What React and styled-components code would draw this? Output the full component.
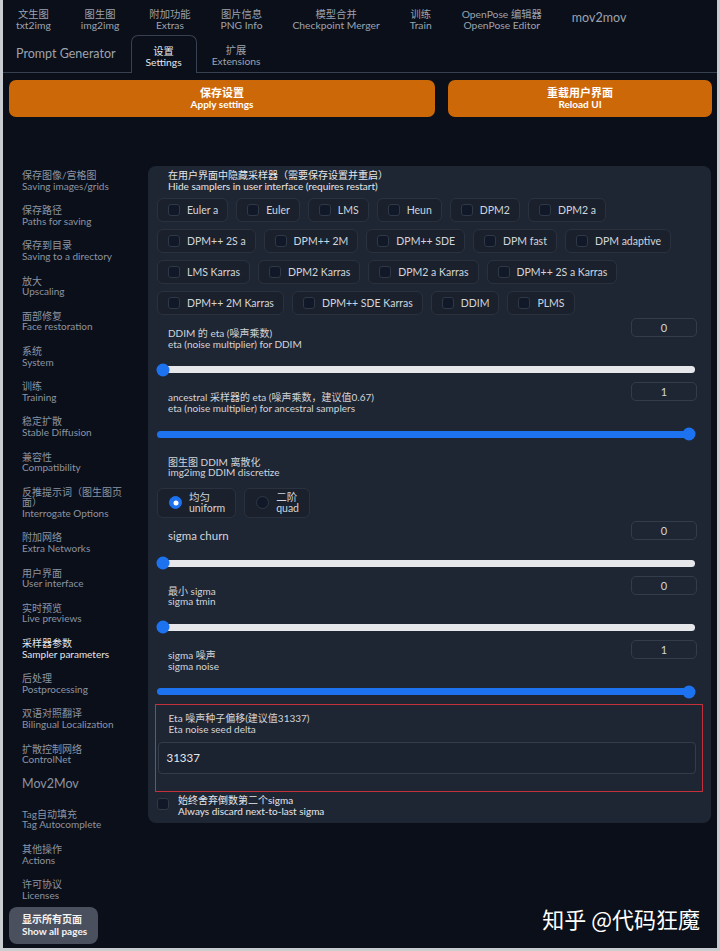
import React from 'react';
import styled, { createGlobalStyle, css } from 'styled-components';

const GlobalStyle = createGlobalStyle`
  html, body { margin: 0; padding: 0; background: #c9ccd1; }
  body { font-family: Lato, "Noto Sans CJK SC", sans-serif; }
  * { box-sizing: border-box; }
`;

const Frame = styled.div`
  position: relative;
  width: 720px;
  height: 951px;
  border: 3px solid #c9ccd1;
  border-top: none;
  background: #0b0f19;
  overflow: hidden;
  color: #d1d5db;
`;

const NavRow = styled.div`
  display: flex;
  align-items: center;
  height: 35px;
  margin-left: -2px;
`;

const SubRow = styled.div`
  display: flex;
  align-items: stretch;
  height: 38px;
  border-bottom: 1px solid #374151;
  margin-left: -2px;
`;

const Tab = styled.div`
  display: flex;
  flex-direction: column;
  justify-content: center;
  padding: 0 15px;
  color: ${p => (p.$active ? '#e5e7eb' : '#9ca3af')};
  font-size: 12.5px;
  text-align: center;
  white-space: nowrap;
  ${p => p.$active && css`
    padding: 0 14px;
    border: 1px solid #374151;
    border-bottom: none;
    border-radius: 7px 7px 0 0;
    background: #0b0f19;
    margin-bottom: -1px;
  `}
`;

const Bi = styled.div`
  margin-top: 5px;
  font-size: 10.3px;
  line-height: 11px;
`;

const ButtonRow = styled.div`
  display: grid;
  grid-template-columns: 426fr 264fr;
  gap: 13px;
  margin-top: 7px;
  padding: 0 5px 0 6px;
`;

const ActionButton = styled.button`
  height: 37px;
  border: none;
  border-radius: 7px;
  background: #cd6809;
  color: #fff;
  font-family: inherit;
  font-weight: 700;
  line-height: 11.5px;
  display: flex;
  flex-direction: column;
  align-items: center;
  justify-content: center;
  & span:first-child { font-size: 11px; line-height: 12px; }
  & span:last-child { font-size: 10px; }
`;

const Main = styled.div`
  display: grid;
  grid-template-columns: 132px 1fr;
  gap: 7px;
  align-items: start;
  margin-top: 46px;
  padding: 0 6px 0 6px;
`;

const Sidebar = styled.nav`
  display: flex;
  flex-direction: column;
`;

const NavItem = styled.div`
  padding: 7px 13px;
  font-size: 10px;
  line-height: 10.6px;
  color: ${p => (p.$active ? '#e5e7eb' : '#8c94a2')};
`;

const NavSingle = styled.div`
  padding: 4px 13px 10px;
  font-size: 12.5px;
  line-height: 16px;
  color: #8c94a2;
`;

const ShowAll = styled.div`
  width: 89px;
  height: 37px;
  border-radius: 8px;
  background: #4a505d;
  color: #f3f4f6;
  font-weight: 700;
  font-size: 10px;
  line-height: 11.5px;
  padding: 7px 0 7px 13px;
  white-space: nowrap;
`;

const Panel = styled.section`
  margin-top: 3px;
  background: #1f2633;
  border-radius: 8px;
  padding: 4px 14px 7px 9px;
`;

const Label = styled.div`
  padding-left: 11px;
  margin-top: ${p => p.$mt || 0}px;
  font-size: 10px;
  line-height: 10.6px;
  color: ${p => (p.$bright ? '#e5e7eb' : '#d1d5db')};
`;

const CheckGroup = styled.div`
  display: flex;
  flex-direction: column;
  gap: 7px;
  margin-top: 7px;
`;

const CheckLine = styled.div`
  display: flex;
  gap: 8px;
`;

const CheckItem = styled.label`
  display: flex;
  align-items: center;
  gap: 7px;
  height: 24px;
  padding: 0 9px 0 10px;
  background: #1a212d;
  border: 1px solid #2a3240;
  border-radius: 6px;
  font-size: 10.5px;
  color: #d1d5db;
  white-space: nowrap;
`;

const Box = styled.span`
  flex: none;
  width: 12px;
  height: 12px;
  border-radius: 3px;
  background: #111827;
  border: 1px solid #2f3846;
  margin-top: ${p => p.$mt || 0}px;
`;

const SliderBlock = styled.div`
  display: flex;
  flex-direction: column;
`;

const Header = styled.div`
  display: flex;
  justify-content: space-between;
  align-items: flex-start;
`;

const HeadLabel = styled(Label)`
  margin-top: ${p => (p.$single ? 8 : 10)}px;
  ${p => p.$single && css`
    font-size: 11.5px;
    line-height: 14px;
  `}
`;

const NumberBox = styled.div`
  width: 66px;
  height: 19px;
  border: 1px solid #333c4b;
  border-radius: 5px;
  text-align: center;
  font-size: 11px;
  line-height: 17px;
  color: #d1d5db;
`;

const Track = styled.div`
  position: relative;
  height: 7px;
  margin: 17px 2px 9px 0;
  border-radius: 4px;
  background: ${p => `linear-gradient(to right, #1d72f0 ${p.$pct}%, #e5e7eb ${p.$pct}%)`};
`;

const Thumb = styled.span`
  position: absolute;
  top: 50%;
  width: 13px;
  height: 13px;
  border-radius: 50%;
  background: #1d72f0;
  transform: translate(-50%, -50%);
`;

const RadioGroup = styled.div`
  display: flex;
  gap: 8px;
  margin-top: 10px;
`;

const RadioItem = styled.label`
  display: flex;
  align-items: center;
  gap: 7px;
  height: 30px;
  padding: 0 10px 0 11px;
  background: #1a212d;
  border: 1px solid #2a3240;
  border-radius: 6px;
  font-size: 10.5px;
  line-height: 11px;
  color: #d1d5db;
`;

const RadioDot = styled.span`
  position: relative;
  width: 13px;
  height: 13px;
  border-radius: 50%;
  background: ${p => (p.$on ? '#1d72f0' : '#111827')};
  border: 1px solid ${p => (p.$on ? '#1d72f0' : '#2f3846')};
  ${p => p.$on && css`
    &::after {
      content: '';
      position: absolute;
      left: 50%;
      top: 50%;
      width: 5px;
      height: 5px;
      border-radius: 50%;
      background: #fff;
      transform: translate(-50%, -50%);
    }
  `}
`;

const Highlight = styled.div`
  margin: 0 -6px 0 -2px;
  border: 1.5px solid #c4313b;
  padding: 8px 6.5px 17px 1.5px;
`;

const TextInput = styled.div`
  margin-top: 8px;
  height: 32px;
  background: #1c2330;
  border: 1px solid #333c4b;
  border-radius: 4px;
  padding-left: 8px;
  font-size: 11.5px;
  line-height: 30px;
  color: #e5e7eb;
`;

const CheckRow = styled.label`
  display: flex;
  align-items: flex-start;
  gap: 9px;
  margin-top: 3px;
  font-size: 10px;
  line-height: 10.5px;
  color: #e5e7eb;
`;

const Spacer = styled.div`
  height: 3px;
`;

const Watermark = styled.div`
  position: absolute;
  right: 17px;
  bottom: 17px;
  font-family: "Noto Sans CJK SC", sans-serif;
  font-size: 22px;
  line-height: 26px;
  color: #fff;
`;

const topTabs = [
  ['文生图', 'txt2img'],
  ['图生图', 'img2img'],
  ['附加功能', 'Extras'],
  ['图片信息', 'PNG Info'],
  ['模型合并', 'Checkpoint Merger'],
  ['训练', 'Train'],
  ['OpenPose 编辑器', 'OpenPose Editor'],
];

const pages = [
  ['保存图像/宫格图', 'Saving images/grids'],
  ['保存路径', 'Paths for saving'],
  ['保存到目录', 'Saving to a directory'],
  ['放大', 'Upscaling'],
  ['面部修复', 'Face restoration'],
  ['系统', 'System'],
  ['训练', 'Training'],
  ['稳定扩散', 'Stable Diffusion'],
  ['兼容性', 'Compatibility'],
  ['反推提示词（图生图页面）', 'Interrogate Options'],
  ['附加网络', 'Extra Networks'],
  ['用户界面', 'User interface'],
  ['实时预览', 'Live previews'],
  ['采样器参数', 'Sampler parameters', true],
  ['后处理', 'Postprocessing'],
  ['双语对照翻译', 'Bilingual Localization'],
  ['扩散控制网络', 'ControlNet'],
];

const morePages = [
  ['Tag自动填充', 'Tag Autocomplete'],
  ['其他操作', 'Actions'],
  ['许可协议', 'Licenses'],
];

const samplerRows = [
  ['Euler a', 'Euler', 'LMS', 'Heun', 'DPM2', 'DPM2 a'],
  ['DPM++ 2S a', 'DPM++ 2M', 'DPM++ SDE', 'DPM fast', 'DPM adaptive'],
  ['LMS Karras', 'DPM2 Karras', 'DPM2 a Karras', 'DPM++ 2S a Karras'],
  ['DPM++ 2M Karras', 'DPM++ SDE Karras', 'DDIM', 'PLMS'],
];

function Slider({ zh, en, value, pct, single }) {
  return (
    <SliderBlock>
      <Header>
        <HeadLabel $single={single}>
          {zh && <div>{zh}</div>}
          <div>{en}</div>
        </HeadLabel>
        <NumberBox>{value}</NumberBox>
      </Header>
      <Track $pct={pct}>
        <Thumb style={{ left: `calc(6px + ${pct / 100} * (100% - 12px))` }} />
      </Track>
    </SliderBlock>
  );
}

export default function App() {
  return (
    <>
      <GlobalStyle />
      <Frame>
        <NavRow>
          {topTabs.map(([zh, en]) => (
            <Tab key={en}>
              <Bi>{zh}<br />{en}</Bi>
            </Tab>
          ))}
          <Tab>mov2mov</Tab>
        </NavRow>
        <SubRow>
          <Tab>Prompt Generator</Tab>
          <Tab $active>
            <Bi>设置<br />Settings</Bi>
          </Tab>
          <Tab>
            <Bi>扩展<br />Extensions</Bi>
          </Tab>
        </SubRow>

        <ButtonRow>
          <ActionButton>
            <span>保存设置</span>
            <span>Apply settings</span>
          </ActionButton>
          <ActionButton>
            <span>重载用户界面</span>
            <span>Reload UI</span>
          </ActionButton>
        </ButtonRow>

        <Main>
          <Sidebar>
            {pages.map(([zh, en, active]) => (
              <NavItem key={en} $active={active}>
                <div>{zh}</div>
                <div>{en}</div>
              </NavItem>
            ))}
            <NavSingle>Mov2Mov</NavSingle>
            {morePages.map(([zh, en]) => (
              <NavItem key={en}>
                <div>{zh}</div>
                <div>{en}</div>
              </NavItem>
            ))}
            <ShowAll>
              <div>显示所有页面</div>
              <div>Show all pages</div>
            </ShowAll>
          </Sidebar>

          <Panel>
            <Label $bright>
              <div>在用户界面中隐藏采样器（需要保存设置并重启）</div>
              <div>Hide samplers in user interface (requires restart)</div>
            </Label>
            <CheckGroup>
              {samplerRows.map((row, i) => (
                <CheckLine key={i}>
                  {row.map(s => (
                    <CheckItem key={s}>
                      <Box />
                      {s}
                    </CheckItem>
                  ))}
                </CheckLine>
              ))}
            </CheckGroup>

            <Spacer />
            <Slider zh="DDIM 的 eta (噪声乘数)" en="eta (noise multiplier) for DDIM" value="0" pct={0} />
            <Slider zh="ancestral 采样器的 eta (噪声乘数，建议值0.67)" en="eta (noise multiplier) for ancestral samplers" value="1" pct={100} />

            <Label $mt={10}>
              <div>图生图 DDIM 离散化</div>
              <div>img2img DDIM discretize</div>
            </Label>
            <RadioGroup>
              <RadioItem>
                <RadioDot $on />
                <div>均匀<br />uniform</div>
              </RadioItem>
              <RadioItem>
                <RadioDot />
                <div>二阶<br />quad</div>
              </RadioItem>
            </RadioGroup>

            <Spacer />
            <Slider en="sigma churn" value="0" pct={0} single />
            <Slider zh="最小 sigma" en="sigma tmin" value="0" pct={0} />
            <Slider zh="sigma 噪声" en="sigma noise" value="1" pct={100} />

            <Highlight>
              <Label>
                <div>Eta 噪声种子偏移(建议值31337)</div>
                <div>Eta noise seed delta</div>
              </Label>
              <TextInput>31337</TextInput>
            </Highlight>

            <CheckRow>
              <Box $mt={3} />
              <div>
                <div>始终舍弃倒数第二个sigma</div>
                <div>Always discard next-to-last sigma</div>
              </div>
            </CheckRow>
          </Panel>
        </Main>

        <Watermark>知乎 @代码狂魔</Watermark>
      </Frame>
    </>
  );
}
